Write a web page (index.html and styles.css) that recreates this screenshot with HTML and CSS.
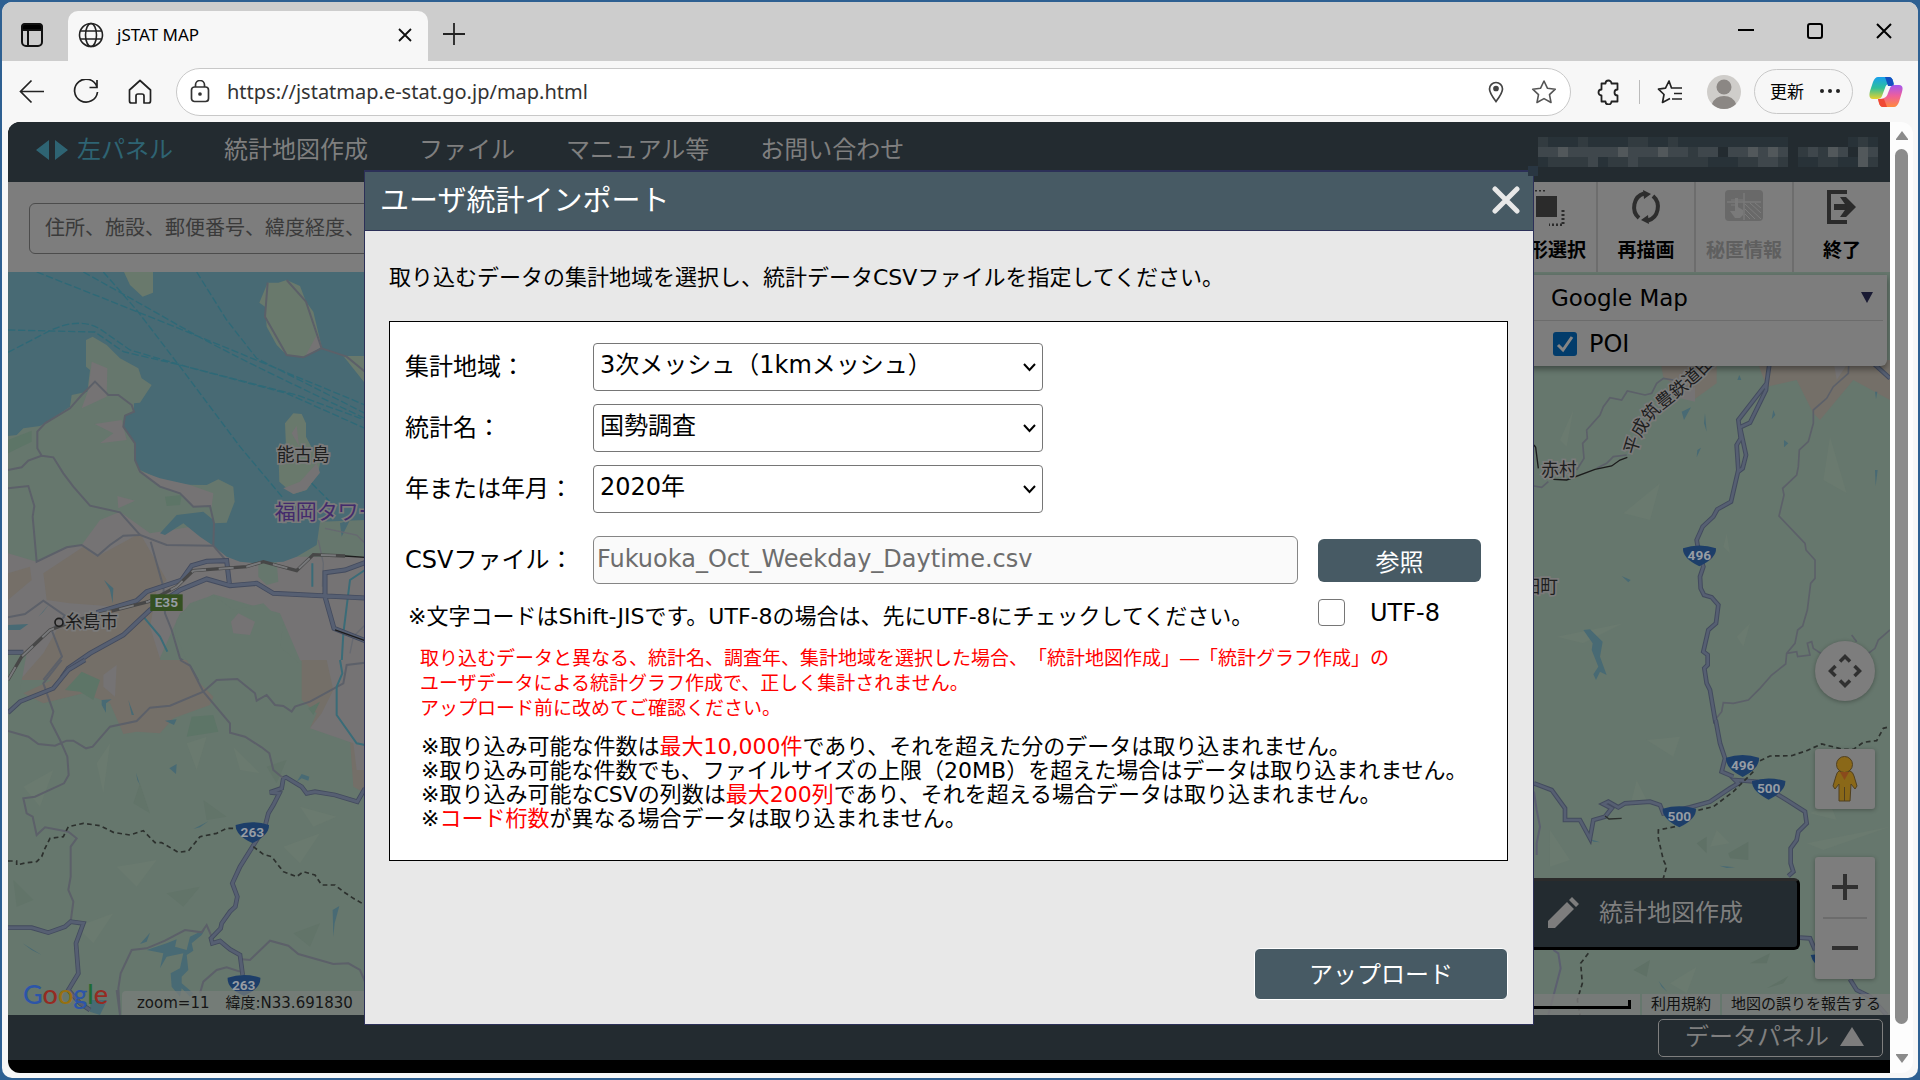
FILE: index.html
```html
<!DOCTYPE html>
<html lang="ja">
<head>
    <meta charset="UTF-8">
    <meta name="viewport" content="width=device-width, initial-scale=1.0">
    <title>jSTAT MAP</title>
    <link rel="stylesheet" href="styles.css">
</head>
<body>
<div class="window">
    <!-- title bar -->
    <div class="titlebar">
        <button class="icon-btn tab-actions" aria-label="タブ操作">
            <svg width="24" height="26" viewBox="0 0 24 26" fill="none" stroke="#111" stroke-width="2"><rect x="2" y="2" width="20" height="22" rx="4"/><path d="M2 8H22V5Q22 2 19 2H5Q2 2 2 5Z" fill="#000"/><path d="M8 8V24"/></svg>
        </button>
        <div class="tab">
            <svg width="26" height="26" viewBox="0 0 26 26" fill="none" stroke="#222" stroke-width="1.6"><circle cx="13" cy="13" r="11.5"/><ellipse cx="13" cy="13" rx="5.5" ry="11.5"/><path d="M2.5 9H23.500M2.500 17H23.500"/></svg>
            <span class="tab-title">jSTAT MAP</span>
            <button class="icon-btn" aria-label="タブを閉じる"><svg width="14" height="14" viewBox="0 0 14 14" stroke="#111" stroke-width="1.8"><path d="M1 1L13 13M13 1L1 13"/></svg></button>
        </div>
        <button class="icon-btn new-tab" aria-label="新しいタブ"><svg width="22" height="22" viewBox="0 0 22 22" stroke="#222" stroke-width="1.8"><path d="M11 0V22M0 11H22"/></svg></button>
        <div class="win-controls">
            <button class="icon-btn" aria-label="最小化"><svg width="16" height="16" viewBox="0 0 16 16" stroke="#000" stroke-width="2"><path d="M0 7H16"/></svg></button>
            <button class="icon-btn" aria-label="最大化"><svg width="16" height="16" viewBox="0 0 16 16" fill="none" stroke="#000" stroke-width="2"><rect x="1" y="1" width="14" height="14" rx="2"/></svg></button>
            <button class="icon-btn" aria-label="閉じる"><svg width="16" height="16" viewBox="0 0 16 16" stroke="#000" stroke-width="2"><path d="M1 1L15 15M15 1L1 15"/></svg></button>
        </div>
    </div>

    <!-- address bar -->
    <div class="toolbar">
        <div class="nav-buttons">
            <button class="icon-btn" aria-label="戻る"><svg width="26" height="26" viewBox="0 0 26 26" fill="none" stroke="#222" stroke-width="1.7"><path d="M25 12.500H2M12.500 1.500L1.500 12.500L12.500 23.500"/></svg></button>
            <button class="icon-btn" aria-label="更新"><svg width="26" height="26" viewBox="0 0 26 26" fill="none" stroke="#222" stroke-width="1.7"><path d="M24 8A11.500 11.500 0 1 0 24.500 13M24 1V8.500H16.500"/></svg></button>
            <button class="icon-btn" aria-label="ホーム"><svg width="26" height="26" viewBox="0 0 26 26" fill="none" stroke="#222" stroke-width="1.7" stroke-linejoin="round"><path d="M2.500 11L13 1.500L23.500 11V22Q23.500 24 21.500 24H17V17Q17 15 15 15H11Q9 15 9 17V24H4.500Q2.500 24 2.500 22Z"/></svg></button>
        </div>
        <div class="address">
            <svg width="20" height="24" viewBox="0 0 20 24" fill="none" stroke="#333" stroke-width="1.7"><rect x="1.500" y="7" width="17" height="14.500" rx="3"/><path d="M5.500 7V5A4.500 4.500 0 0 1 14.500 5V7"/><circle cx="10" cy="14" r="1" fill="#333"/></svg>
            <input type="text" class="url" aria-label="アドレス" value="https://jstatmap.e-stat.go.jp/map.html">
            <svg width="16" height="22" viewBox="0 0 16 22" fill="none" stroke="#444" stroke-width="1.7"><path d="M8 20.500Q1.500 12 1.500 8A6.500 6.500 0 0 1 14.500 8Q14.500 12 8 20.500Z"/><circle cx="8" cy="7.500" r="2" fill="#444"/></svg>
            <button class="icon-btn star" aria-label="お気に入りに追加"><svg width="26" height="26" viewBox="0 0 26 26" fill="none" stroke="#555" stroke-width="1.6" stroke-linejoin="round"><path d="M13 2L16.400 9.200L24.300 10.200L18.500 15.600L20 23.500L13 19.600L6 23.500L7.500 15.600L1.700 10.200L9.600 9.200Z"/></svg></button>
        </div>
        <div class="tools">
            <button class="icon-btn" aria-label="拡張機能"><svg width="26" height="26" viewBox="0 0 26 26" fill="none" stroke="#222" stroke-width="1.8" stroke-linejoin="round"><path d="M5.500 4.500H9.500A3 3 0 1 1 15.500 4.500H21.500V10.500A3 3 0 1 0 21.500 16.500V22.500H15.500A3 3 0 1 1 9.500 22.500H5.500V16.500A3 3 0 1 1 5.500 10.500Z"/></svg></button>
            <span class="divider"></span>
            <button class="icon-btn" aria-label="お気に入り"><svg width="26" height="26" viewBox="0 0 26 26" fill="none" stroke="#222" stroke-width="1.7" stroke-linejoin="round"><path d="M15.500 9H14.500L12 2L8.500 9.200L1.500 10.200L7 15.500L5.500 23.500L13 19.600M15.500 9H25M17 14.500H25M15 20H25"/></svg></button>
            <svg width="34" height="34" viewBox="0 0 34 34"><circle cx="17" cy="17" r="17" fill="#cfcdca"/><circle cx="17" cy="12" r="7.500" fill="#8b8784"/><path d="M5 29Q8 21 17 21T29 29Q24 34 17 34T5 29Z" fill="#8b8784"/></svg>
            <button class="update">更新<svg width="20" height="4" viewBox="0 0 20 4" fill="#222"><circle cx="2" cy="2" r="2"/><circle cx="10" cy="2" r="2"/><circle cx="18" cy="2" r="2"/></svg></button>
            <svg width="34" height="32" viewBox="0 0 34 32">
                <defs>
                    <linearGradient id="cpa" x1="0" y1="0" x2="0" y2="1"><stop offset="0" stop-color="#18a0ee"/><stop offset=".5" stop-color="#2fbf9a"/><stop offset="1" stop-color="#e8d22c"/></linearGradient>
                    <linearGradient id="cpb" x1="0" y1="0" x2="0" y2="1"><stop offset="0" stop-color="#a557f0"/><stop offset=".5" stop-color="#ef5f9a"/><stop offset="1" stop-color="#ff8a3c"/></linearGradient>
                </defs>
                <path d="M9 1H20Q23 1 24 5L25 8H20Q17 8 16 12L13 20Q12 23 8 23H4Q-1 23 1 15L4 6Q6 1 9 1Z" fill="url(#cpa)"/>
                <path d="M16 1H20Q23 1 24 5L25 10H19Z" fill="#1450c0"/>
                <path d="M26 9H30Q35 9 33 16L30 26Q28 31 25 31H14Q11 31 10 27L9 23Q13 23 15 22Q18 21 19 17L21 12Q22 9 26 9Z" fill="url(#cpb)"/>
                <path d="M9 23H15L18 31H14Q11 31 10 27Z" fill="#ef4a35"/>
            </svg>
        </div>
    </div>

    <div class="viewport">
        <div class="page">
            <header class="site-nav">
                <button class="panel-toggle"><svg width="32" height="20" viewBox="0 0 32 20" fill="#2e6473"><path d="M0 10L13 0V20ZM32 10L19 0V20Z"/></svg>左パネル</button>
                <a href="#">統計地図作成</a>
                <a href="#">ファイル</a>
                <a href="#">マニュアル等</a>
                <a href="#">お問い合わせ</a>
                <!-- masked account name -->
                <svg class="account" width="340" height="30" viewBox="0 0 34 3" shape-rendering="crispEdges">
                    <path fill="#283238" d="M0 0h34v3h-34z"/>
                    <path fill="#323b40" d="M0 0h1v1h-1zM4 0h1v1h-1zM9 0h2v1h-2zM13 0h1v1h-1zM32 0h1v1h-1zM1 2h4v1h-4zM7 2h2v1h-2zM10 2h5v1h-5zM15 2h2v1h-2zM20 2h2v1h-2zM24 2h1v1h-1zM28 2h2v1h-2zM33 2h1v1h-1zM26 1h3v1h-3zM15 1h1v1h-1z"/>
                    <path fill="#3f474c" d="M0 1h2v1h-2zM3 1h5v1h-5zM9 1h3v1h-3zM13 1h2v1h-2zM16 1h2v1h-2zM19 1h2v1h-2zM22 1h3v1h-3zM27 1h1v1h-1zM30 1h1v1h-1zM33 1h1v1h-1zM5 2h1v1h-1zM9 2h1v1h-1zM22 2h2v1h-2z"/>
                    <path fill="#52585b" d="M2 1h1v1h-1zM8 1h1v1h-1zM12 1h1v1h-1zM21 1h1v1h-1zM23 1h1v1h-1zM29 1h1v1h-1zM32 1h1v2h-1z"/>
                    <path fill="#232b30" d="M18 1h1v1h-1zM25 1h1v2h-1zM31 1h1v1h-1zM25 0h6v1h-6z"/>
                </svg>
            </header>

            <div class="map-tools">
                <input type="text" class="search" aria-label="検索" placeholder="住所、施設、郵便番号、緯度経度、メッシュコードを入力">
                <div class="tool-buttons">
                    <button><svg width="38" height="36" viewBox="0 0 38 36"><rect x="7" y="6" width="21" height="21" fill="#2b2b2b"/><path d="M2 0H16M34 20V35H20" fill="none" stroke="#2b2b2b" stroke-width="3" stroke-dasharray="2"/></svg>図形選択</button>
                    <button><svg width="32" height="34" viewBox="0 0 32 34" fill="none" stroke="#2d2d2d" stroke-width="4"><path d="M9 28A13 14 0 0 1 14 3.500M23 6A13 14 0 0 1 18 30.500"/><path d="M13 0L21 4L14 9ZM19 34L11 30L18 25Z" fill="#2d2d2d" stroke="none"/></svg>再描画</button>
                    <button disabled><svg width="38" height="32" viewBox="0 0 38 32"><rect width="38" height="31" rx="4" fill="#696969"/><path d="M19 3V30M2 12H36" stroke="#7a7a7a" stroke-width="1.500"/><path d="M20 14L36 29M20 19L30 29M20 24L25 29M25 13L36 23M30 13L36 18M6 15H13M6 10H18" stroke="#7d7d7d"/><path d="M10 8h3v9l5 3v5l-3 3h-5l-5-7h5z" fill="#7a7a7a"/></svg>秘匿情報</button>
                    <button><svg width="30" height="34" viewBox="0 0 30 34" fill="none" stroke="#2b2b2b" stroke-width="4"><path d="M20 2H2V32H20"/><path d="M7 17H20" stroke-width="6"/><path d="M13 7H19L29 17L19 27H13L20 17Z" fill="#2b2b2b" stroke="none"/></svg>終了</button>
                </div>
            </div>

            <div class="map">
                <svg class="map-canvas" viewBox="8 272 1882 743" preserveAspectRatio="xMinYMin slice">
                    <rect x="8" y="272" width="1882" height="743" fill="#66776d"/>
                    <!-- north west: bay, peninsula and town -->
                    <g transform="translate(0 260) scale(.33333)">
                        <path fill="#757374" d="M24 880L110 905L200 862L245 855L300 780L360 755L450 820L640 790L700 890H1095V1300H1060L900 1200L840 1060L640 1003L540 1060L450 1260H24Z"/>
                        <path fill="#756f68" d="M130 940L250 860L290 890L420 820L500 960L470 990L450 1100L500 1260H150L240 1160L180 1100L350 1040L210 1030L140 1020ZM24 940L90 920L95 960L24 1020ZM170 1110L260 1090L300 1160L180 1260H60L130 1180Z"/>
                        <path fill="#66776d" d="M530 1080L570 1030L640 1005L700 1050L790 1030L850 1090L840 1160L910 1220L915 1290H600L560 1200L525 1120ZM24 1170L80 1180L60 1290H24ZM775 900L830 905L835 965L800 975L775 950Z"/>
                        <path fill="#757374" d="M693 1085L715 1060L765 1085L750 1125L700 1120Z"/>
                        <path fill="#486a74" d="M24 30H1095V780L960 785L950 855L890 890L850 905L770 910L720 905L680 890L640 857L642 790L680 788L704 725L700 680L655 658L620 675L560 674L480 658L420 630L405 600L405 550L370 500L375 465L402 455L402 430L420 428L455 375L425 355L415 325L360 295L320 255L278 230L258 240L258 320L270 330L262 395L215 405L210 440L135 490L120 498L70 505L50 525L24 528Z"/>
                        <path fill="#69796c" d="M372 36H459V98L428 110L390 75ZM803 68H835L860 60L900 78L918 125L940 155L965 260L910 292L860 285L830 255L800 200L795 140L778 128ZM855 490L880 460L905 462L918 490V530L960 610L955 640L920 690L880 702L838 665L836 600L858 560ZM1030 288H1095V370Z"/>
                        <path fill="#757374" d="M275 305L322 325L320 410L245 445L265 390ZM284 492L365 480L380 540L300 550L340 520ZM352 708L405 722L355 745ZM410 630L480 655L570 675L640 700L635 740L580 740L540 700L480 680ZM875 520L890 497L897 558ZM950 610L960 638L918 690L880 702L850 685L900 665ZM950 225L965 260L915 290Z"/>
                        <path fill="#486a74" d="M480 820L530 765L610 755L640 780V857L600 830L550 790L495 825ZM24 1095L85 1092L60 1110H24ZM130 1055L115 1070L150 1030ZM312 960L340 985L338 1030L330 990ZM1020 790L1050 780L1025 830Z"/>
                        <path fill="#5d7567" d="M24 540L95 512V545L24 580ZM495 710L545 705L540 735L500 738Z"/>
                        <g fill="none" stroke="#2e6977" stroke-width="4" stroke-dasharray="22 8">
                            <path d="M110 36Q350 130 560 215T1095 435M250 36Q420 130 560 210T1095 475M24 210L285 216L370 275L540 315L860 400L1095 505M24 277L150 212Q240 170 300 207L390 270L560 320L890 405L1095 480M310 36L410 150L540 320L720 560L850 715M590 36L680 180L770 295L1095 460M935 670L1000 735"/>
                        </g>
                        <g fill="none" stroke="#5c6069" stroke-width="6">
                            <path d="M24 630L65 622L85 602L125 587L112 565V515L135 490L210 445L245 405L285 365L325 405H355L395 435L402 455L375 467L370 500L405 550V600L420 635L480 680L540 700L580 740L630 738L642 790L640 857L500 855L420 825L360 757L270 737L220 680L190 640L160 592L125 587M24 685L85 678L103 738L98 770L110 905L200 862L245 855L293 887L330 855L370 827L420 825M452 845L490 980L495 1060L515 1110L540 1195L570 1217L595 1262M640 857L685 910M24 1072L75 1062L130 1022L195 1067L155 1110L186 1190L130 1260M803 68L795 170L860 285L910 292L965 265L918 125L860 60M965 265L1040 290L1095 335"/>
                            <path stroke="#666970" stroke-width="4" d="M955 840L970 910L967 980M975 805L1070 825L1095 850M1095 1095L1060 1130L1050 1180M1035 1260V1212L1095 1205"/>
                        </g>
                        <path fill="none" stroke="#3a6c78" stroke-width="6" d="M1022 1260L1030 1120L1050 960L1095 930M430 1070L480 1130L502 1175M937 910V980"/>
                        <g fill="none">
                            <path stroke="#434b5e" stroke-width="15" d="M24 1177H70M160 1290L205 1225L270 1180L370 1125L450 1050L540 990L620 957L690 977L770 970L820 1000L980 1008L1095 1014M290 1058L410 1022L440 995L545 960L575 917L620 904L680 902L688 970M1095 908L1035 930L975 938V1010L1002 1105L1095 1142"/>
                            <path stroke="#565f72" stroke-width="10" d="M24 1177H70M160 1290L205 1225L270 1180L370 1125L450 1050L540 990L620 957L690 977L770 970L820 1000L980 1008L1095 1014M290 1058L410 1022L440 995L545 960L575 917L620 904L680 902L688 970M1095 908L1035 930L975 938V1010L1002 1105L1095 1142"/>
                            <path stroke="#474747" stroke-width="10" d="M24 1260L65 1190L150 1110L230 1080L445 1025L530 980L580 932L740 920L790 905L890 932L940 884L1035 888"/>
                            <path stroke="#77787a" stroke-width="6" stroke-dasharray="45 38" d="M24 1260L65 1190L150 1110L230 1080L445 1025L530 980L580 932L740 920L790 905L890 932L940 884L1035 888"/>
                            <path stroke="#1c1c1c" stroke-width="4" d="M1035 888L1095 892M1005 1110L1095 1142"/>
                        </g>
                        <rect x="451" y="1003" width="97" height="50" fill="#355022"/>
                        <text class="badge" x="499" y="1042">E35</text>
                        <circle cx="177" cy="1087" r="12" fill="#757374" stroke="#1e1e1e" stroke-width="5"/>
                        <g class="place">
                            <text x="830" y="604">能古島</text>
                            <text x="195" y="1104">糸島市</text>
                            <text class="poi" x="824" y="777">福岡タワー</text>
                        </g>
                    </g>
                    <!-- south west: mountains -->
                    <g transform="translate(0 660) scale(.33333)">
                        <path fill="#746f68" d="M220 30L270 0H560L600 70L640 110L630 135L520 175L480 220L410 215L370 222L330 130L250 100L130 130L70 100ZM905 0H1095V400L1060 380L1050 240L930 205L950 160L905 120Z"/>
                        <path fill="#757374" d="M980 0H1095V330L1070 330L1060 250L930 205L965 160L1000 90ZM310 45L350 15L345 110L310 80Z"/>
                        <path fill="#5d7567" d="M195 90L245 35L300 60L280 120L240 95ZM575 170L640 165L655 215L560 230ZM925 145L960 125L940 165Z"/>
                        <g fill="#6a7a6f"><path d="M290 310L330 250L310 400ZM560 250L620 230L590 330ZM70 380L160 330L120 440ZM350 620L470 600L410 680ZM850 560L960 520L900 610ZM230 800L340 760L280 850ZM900 440L1010 470L940 500ZM700 260L780 340L720 330Z"/></g>
                        <g fill="#627469"><path d="M420 370L450 460L400 430ZM800 320L860 300L830 370ZM40 660L100 720L50 740ZM500 700L600 680L550 740ZM880 820L960 790L930 860ZM610 420L680 470L620 480Z"/></g>
                        <path fill="#486a74" d="M305 120L335 118L318 130V158L305 135ZM508 325L530 312L528 342ZM890 365L905 342L928 350L925 362L905 355ZM385 120L402 165H395ZM408 338L420 375L412 360ZM495 182L530 178L522 195ZM440 870L500 850L530 838L525 860L560 870L570 830L615 808L605 825L575 850L580 872L560 885L565 930L545 950V970L580 1000L570 1010L545 985L540 1010L515 980L512 940L540 925L550 880L500 890L480 925L490 880ZM420 852L450 818L440 845ZM68 850L125 885L95 870ZM580 507L625 484L600 502ZM265 710L277 676ZM998 750L1018 738L1004 790L1000 830ZM932 785L950 762ZM272 1020H322L300 1065L270 1055Z"/>
                        <g fill="none" stroke="#5c6069" stroke-width="6">
                            <path d="M185 0L130 70L160 155L152 185L180 240L202 290L206 345L192 370L105 410L70 415L80 460L98 470L110 525L135 502L205 515L230 535L212 560V650L205 690L220 725L212 785M24 213L85 230L115 252L165 257L200 242H220L258 265L278 260L330 200L410 183L450 143L510 137L610 95L650 60L712 57L765 100L770 122L800 105L825 135L850 138L875 155L885 140L930 125L1030 70L1040 15L1095 8M540 0L570 17L610 95L690 190V218L735 230L785 262L808 280L820 330L850 355M360 1065L355 985L362 940L395 870L440 865L495 842L555 810L605 817L620 795L635 830M360 1065L350 990M600 1000L610 965L650 930L680 922L720 935M725 898L750 900L810 842L865 857L895 882L1000 912L1045 910L1080 930L1095 965"/>
                            <path stroke="#3a6c78" d="M1020 0L1027 40L1010 80V165L1070 250L1095 255"/>
                        </g>
                        <g fill="none">
                            <path stroke="#434b5e" stroke-width="14" d="M24 158L60 125L160 85L205 30L255 0M24 803H95L145 818L195 800L212 785L250 790L228 850L235 940L205 990L240 1030L270 1050M850 355L858 352L905 380L920 400L945 395L1005 405L1072 425L1095 385M850 355L845 385L810 397L838 400L820 435L805 460L795 500L720 620L697 670L712 710L706 740L690 755L665 790L662 805L633 835L637 850L660 843L690 868L720 885L728 945"/>
                            <path stroke="#565f72" stroke-width="9" d="M24 158L60 125L160 85L205 30L255 0M24 803H95L145 818L195 800L212 785L250 790L228 850L235 940L205 990L240 1030L270 1050M850 355L858 352L905 380L920 400L945 395L1005 405L1072 425L1095 385M850 355L845 385L810 397L838 400L820 435L805 460L795 500L720 620L697 670L712 710L706 740L690 755L665 790L662 805L633 835L637 850L660 843L690 868L720 885L728 945"/>
                            <path stroke="#2c302d" stroke-width="5" stroke-dasharray="14 10" d="M24 603H50V615L80 608L110 605L125 590L135 565L150 535L190 530L205 500L250 490L300 497L340 517L390 525L430 512L465 548H485L535 577L565 573L600 530L650 520L680 505H712M760 560L790 583L815 590L850 635L890 650L910 635L945 645L965 675L1005 675L1030 695L1060 715L1095 735"/>
                        </g>
                        <g class="shields">
                            <path d="M707 495Q757 478 807 495Q808 525 757 549Q706 525 707 495Z"/><text class="badge" x="757" y="530">263</text>
                            <path d="M683 953Q732 937 781 953Q784 985 732 1008Q680 985 683 953Z"/><text class="badge" x="731" y="989">263</text>
                        </g>
                    </g>
                    <!-- north east -->
                    <g transform="translate(1530 360) scale(.33333)">
                        <path fill="#746f68" d="M390 0H560V70L490 120L400 50ZM680 0H1080V120L970 60L870 180L850 160L800 60L710 80Z"/>
                        <path fill="#757374" d="M430 110L495 80V125ZM910 0H960L920 60Z"/>
                        <g fill="#6a7a6f"><path d="M90 240L130 150L110 260ZM280 460L390 370L360 480ZM590 520L600 580L580 560ZM880 360L900 230L950 400ZM80 830L280 790L160 850ZM620 830L660 790L640 860Z"/></g>
                        <path fill="#486a74" d="M160 810L180 808L218 845L210 890L230 945L210 935L198 960L190 943L205 920L185 870L188 850ZM455 155L483 142L462 180ZM525 160L530 215L522 190ZM762 240L775 250L762 262ZM66 455L92 480ZM275 648L302 660L295 667ZM154 535L170 570ZM730 150L736 165L725 178ZM1035 95H1042L1038 118ZM1035 330L1043 330L1037 378ZM965 445L955 480ZM628 45L634 60H622ZM502 270L513 263L500 292Z"/>
                        <g fill="none" stroke="#5c6069" stroke-width="5">
                            <path d="M12 378L35 382L55 365M140 330L162 295L158 250L172 235L170 210L210 165L220 140L240 113L275 120L292 93L345 105L365 100L380 70L400 55L430 60M200 325L230 310L250 290L290 285M957 0L955 40L910 80L890 115L850 150V190L835 245L808 270L805 320L800 345L758 385L762 405L747 468L825 550L828 570L855 600V655L842 670L832 750L818 798L803 810L795 850L770 880L767 912L725 945L690 985L655 1020L610 1030L580 1028L575 1055L555 1080M770 880L800 875L803 890L840 885L832 850L845 845L850 865L880 885M1080 810L1045 840L1035 865L1015 880M980 845L965 825"/>
                        </g>
                        <g fill="none">
                            <path stroke="#434b5e" stroke-width="14" d="M720 0L710 70L625 180L632 235L620 255L625 330L603 425L562 448L550 470L518 500L500 540L505 570L520 620L510 650L512 685L522 705L545 712L565 735L558 790L535 810L520 875L533 885V915L523 925L530 970L540 990L557 1090M710 70L708 90L660 188L630 202L648 285L638 325L625 335M1030 10L1080 55"/>
                            <path stroke="#565f72" stroke-width="8" d="M720 0L710 70L625 180L632 235L620 255L625 330L603 425L562 448L550 470L518 500L500 540L505 570L520 620L510 650L512 685L522 705L545 712L565 735L558 790L535 810L520 875L533 885V915L523 925L530 970L540 990L557 1090M710 70L708 90L660 188L630 202L648 285L638 325L625 335M1030 10L1080 55"/>
                            <path stroke="#1c1c1c" stroke-width="4" d="M12 255L17 262L25 325M70 358L110 360L195 328L245 318L270 300L292 292"/>
                        </g>
                        <path class="shield" d="M459 565Q508 548 558 565Q560 595 508 619Q457 595 459 565Z"/><text class="badge" x="508" y="600">496</text>
                        <g class="place">
                            <text x="34" y="348">赤村</text>
                            <text x="-22" y="700">田町</text>
                            <path id="rail" d="M318 286Q335 195 420 130T560 5" fill="none"/>
                            <text><textPath href="#rail">平成筑豊鉄道田</textPath></text>
                        </g>
                    </g>
                    <!-- south east -->
                    <g transform="translate(1530 720) scale(.33333)">
                        <g fill="#6a7a6f"><path d="M350 60L450 50L430 110ZM840 280L900 250L920 300ZM320 180L350 240L300 260ZM830 370L1080 320L880 390ZM60 330L120 420L60 440ZM540 380L560 330L600 370ZM420 790L500 740L470 820Z"/></g>
                        <g fill="#5f7166"><path d="M595 400L655 365V420L600 415ZM710 805L775 768L760 790ZM500 370L530 350L530 400ZM660 730L720 700L710 730ZM310 750L360 720L350 770Z"/></g>
                        <path fill="#486a74" d="M57 22L80 65ZM33 180L118 207ZM180 357L210 367L190 365ZM235 403L290 410ZM568 437L615 442L590 444ZM640 460L677 450ZM386 783L412 816L395 800Z"/>
                        <g fill="none">
                            <path stroke="#5c5f70" stroke-width="6" d="M12 215L20 270L30 320L20 370V405M70 690L85 700L92 745L75 810L55 885"/>
                            <path stroke="#434b5e" stroke-width="14" d="M557 0L570 70L585 115L575 155L610 170M12 190L65 210L105 265V300H150L180 355L190 300L225 290L245 265L220 252L235 245L265 262L285 250L360 245L390 255L400 280L480 262L540 245L600 205L625 190L615 180L680 185L770 240L825 275L830 310L805 335L800 360L782 385V430L790 455L775 468M810 653L840 655L855 690M960 778L980 810L1020 830L1070 885"/>
                            <path stroke="#565f72" stroke-width="8" d="M557 0L570 70L585 115L575 155L610 170M12 190L65 210L105 265V300H150L180 355L190 300L225 290L245 265L220 252L235 245L265 262L285 250L360 245L390 255L400 280L480 262L540 245L600 205L625 190L615 180L680 185L770 240L825 275L830 310L805 335L800 360L782 385V430L790 455L775 468M810 653L840 655L855 690M960 778L980 810L1020 830L1070 885"/>
                            <path stroke="#2c302d" stroke-width="5" stroke-dasharray="14 10" d="M690 122L720 108L785 107L830 92L875 72L940 88H970L1000 67L1040 62L1060 25L1080 20M670 155L610 215L550 260L500 272M435 320L385 330V355L400 420L410 440L400 475M175 700L152 730L157 790L142 840L150 885"/>
                            <path stroke="#2c302d" stroke-width="4" d="M225 288L237 297L275 295"/>
                        </g>
                        <g class="shields">
                            <path d="M588 113Q638 97 687 113Q690 145 638 171Q585 145 588 113Z"/><text class="badge" x="638" y="150">496</text>
                            <path d="M666 183Q716 168 766 183Q768 213 716 239Q664 213 666 183Z"/><text class="badge" x="716" y="219">500</text>
                            <path d="M398 266Q448 252 498 266Q500 296 448 322Q396 296 398 266Z"/><text class="badge" x="448" y="303">500</text>
                            <path d="M842 705L890 700V750Q850 740 842 705Z"/>
                        </g>
                    </g>
                </svg>

                <section class="layers">
                    <button class="layer-head">Google Map<svg width="12" height="11" viewBox="0 0 12 11" fill="#191a33"><path d="M0 0H12L6 11Z"/></svg></button>
                    <label class="layer-item"><input type="checkbox" checked>POI</label>
                </section>

                <div class="map-side">
                    <button class="round" aria-label="移動"><svg width="34" height="34" viewBox="0 0 34 34" fill="none" stroke="#303030" stroke-width="3.500"><path d="M12 7.500L17 2.500L22 7.500M12 26.500L17 31.500L22 26.500M7.500 12L2.500 17L7.500 22M26.500 12L31.500 17L26.500 22"/></svg></button>
                    <button class="square" aria-label="ストリートビュー"><svg width="26" height="46" viewBox="0 0 26 46" fill="#8a6818" stroke="#504020"><path d="M7 15H18Q21 16 22 20L25 30L23 33L19 28L18 45H7V28L3 33L1 30L4 20Q5 16 7 15Z"/><circle cx="12.500" cy="8.500" r="8"/><path d="M8 16H17L12.500 24Z" fill="#8a4a1c" stroke="none"/><path d="M12.500 31V45"/></svg></button>
                    <div class="zoom">
                        <button aria-label="拡大"><svg width="26" height="26" viewBox="0 0 26 26" stroke="#303030" stroke-width="4"><path d="M13 0V26M0 13H26"/></svg></button>
                        <button aria-label="縮小"><svg width="26" height="26" viewBox="0 0 26 26" stroke="#303030" stroke-width="4"><path d="M0 13H26"/></svg></button>
                    </div>
                </div>

                <button class="make-map"><svg width="32" height="32" viewBox="0 0 32 32" fill="#7d7d7d"><path d="M1 24L20 5L27 12L8 31H1ZM22 3L25 0L32 7L29 10Z"/></svg>統計地図作成</button>

                <div class="logo" aria-label="Google"><span class="b">G</span><span class="r">o</span><span class="y">o</span><span class="b">g</span><span class="g">l</span><span class="r">e</span></div>
                <div class="coords"><span>zoom=11</span><span>緯度:N33.691830</span></div>
                <div class="attribution"><span class="scale"><i></i></span><a href="#">利用規約</a><a href="#">地図の誤りを報告する</a></div>
            </div>

            <footer class="data-bar">
                <button>データパネル<svg width="24" height="20" viewBox="0 0 24 20" fill="#7d7d7d"><path d="M12 0L24 19H0Z"/></svg></button>
            </footer>

            <!-- import dialog -->
            <div class="overlay">
                <form class="modal" role="dialog" aria-labelledby="modalTitle">
                    <span class="corner"></span>
                    <div class="modal-head">
                        <h1 id="modalTitle">ユーザ統計インポート</h1>
                        <button type="button" class="icon-btn" aria-label="閉じる"><svg width="28" height="28" viewBox="0 0 28 28" stroke="#e8e8e8" stroke-width="5" stroke-linecap="round"><path d="M3 3L25 25M25 3L3 25"/></svg></button>
                    </div>
                    <div class="modal-body">
                        <p class="lead">取り込むデータの集計地域を選択し、統計データCSVファイルを指定してください。</p>
                        <div class="panel">
                            <div class="row">
                                <label for="area">集計地域：</label>
                                <select id="area"><option>3次メッシュ（1kmメッシュ）</option></select>
                            </div>
                            <div class="row">
                                <label for="stat">統計名：</label>
                                <select id="stat"><option>国勢調査</option></select>
                            </div>
                            <div class="row">
                                <label for="year">年または年月：</label>
                                <select id="year"><option>2020年</option></select>
                            </div>
                            <div class="row file-row">
                                <label for="csv">CSVファイル：</label>
                                <input type="text" id="csv" value="Fukuoka_Oct_Weekday_Daytime.csv" disabled>
                                <button type="button" class="btn browse">参照</button>
                            </div>
                            <div class="encoding">
                                <p>※文字コードはShift-JISです。UTF-8の場合は、先にUTF-8にチェックしてください。</p>
                                <label><input type="checkbox">UTF-8</label>
                            </div>
                            <p class="warning">取り込むデータと異なる、統計名、調査年、集計地域を選択した場合、「統計地図作成」―「統計グラフ作成」の<br>ユーザデータによる統計グラフ作成で、正しく集計されません。<br>アップロード前に改めてご確認ください。</p>
                            <p class="notes">※取り込み可能な件数は<em>最大10,000件</em>であり、それを超えた分のデータは取り込まれません。<br>※取り込み可能な件数でも、ファイルサイズの上限（20MB）を超えた場合はデータは取り込まれません。<br>※取り込み可能なCSVの列数は<em>最大200列</em>であり、それを超える場合データは取り込まれません。<br>※<em>コード桁数</em>が異なる場合データは取り込まれません。</p>
                        </div>
                        <div class="actions"><button type="submit" class="btn upload">アップロード</button></div>
                    </div>
                </form>
            </div>
        </div>

        <div class="scrollbar">
            <svg width="12" height="10" viewBox="0 0 12 10" fill="#8b8b8b"><path d="M6 0L12 8V9H0V8Z"/></svg>
            <span class="thumb"></span>
            <svg width="12" height="10" viewBox="0 0 12 10" fill="#8b8b8b"><path d="M6 9L12 1V0H0V1Z"/></svg>
        </div>
    </div>
</div>
</body>
</html>
```

FILE: styles.css
```css
* {
    box-sizing: border-box;
}
body {
    margin: 0;
    height: 100vh;
    padding: 2px;
    overflow: hidden;
    background: #2e6092;
    font-family: "DejaVu Sans", "Noto Sans CJK JP", sans-serif;
    font-size: 24px;
    text-spacing-trim: space-all;
}
button, input, select {
    font: inherit;
    color: inherit;
    margin: 0;
}
button {
    border: none;
    background: none;
    padding: 0;
    cursor: pointer;
}
p, h1 {
    margin: 0;
}
svg {
    display: block;
    flex: none;
}
a {
    color: inherit;
    text-decoration: none;
}
.icon-btn {
    display: flex;
    align-items: center;
    justify-content: center;
}

/* browser window */
.window {
    height: 100%;
    display: flex;
    flex-direction: column;
    background: #f7f7f7;
    border-radius: 10px;
    overflow: hidden;
}
.titlebar {
    display: flex;
    height: 59px;
    background: #cdcdcd;
}
.tab-actions {
    width: 66px;
    padding: 6px 18px 0 12px;
}
.tab {
    display: flex;
    align-items: center;
    width: 360px;
    margin-top: 9px;
    padding: 0 16px 2px 10px;
    background: #f7f7f7;
    border-radius: 10px 10px 0 0;
}
.tab-title {
    flex: 1;
    padding: 0 0 2px 13px;
    font-family: "Noto Sans", sans-serif;
    font-size: 17px;
}
.new-tab {
    margin: 5px 0 0 15px;
}
.win-controls {
    display: flex;
    gap: 53px;
    margin-left: auto;
    padding: 0 26px 1px 0;
}
.toolbar {
    display: flex;
    align-items: center;
    height: 61px;
    padding: 0 15px 0 17px;
}
.nav-buttons {
    display: flex;
    gap: 28px;
    width: 157px;
}
.address {
    flex: 1;
    display: flex;
    align-items: center;
    height: 48px;
    padding: 0 13px 0 13px;
    border: 1px solid #c8c8c8;
    border-radius: 24px;
    background: #fff;
}
.url {
    flex: 1;
    border: none;
    outline: none;
    padding: 0 0 0 17px;
    background: none;
    color: #333;
    font-family: "Noto Sans", sans-serif;
    font-size: 20px;
}
.star {
    margin-left: 27px;
}
.tools {
    display: flex;
    align-items: center;
    padding-left: 25px;
}
.divider {
    width: 1px;
    height: 24px;
    margin: 0 17px;
    background: #bbb;
}
.tools > svg {
    margin-left: 24px;
}
.update {
    display: flex;
    align-items: center;
    gap: 16px;
    height: 45px;
    margin-left: 13px;
    padding: 0 12px 2px 15px;
    border: 1px solid #c8c8c8;
    border-radius: 23px;
    font-size: 17px;
}
.tools > svg:last-child {
    margin-left: 16px;
}
.viewport {
    flex: 1;
    min-height: 0;
    display: flex;
    padding: 0 5px 5px 6px;
}
.scrollbar {
    width: 23px;
    display: flex;
    flex-direction: column;
    align-items: center;
    gap: 8px;
    padding: 9px 0;
    background: #fdfdfd;
    border-radius: 0 12px 12px 0;
}
.thumb {
    flex: 1;
    width: 13px;
    margin-bottom: 22px;
    border-radius: 7px;
    background: #8b8b8b;
}

/* page */
.page {
    position: relative;
    flex: 1;
    min-width: 0;
    display: flex;
    flex-direction: column;
    padding-bottom: 13px;
    background: #000;
    border-radius: 12px 0 0 12px;
    overflow: hidden;
}
.site-nav {
    display: flex;
    align-items: center;
    gap: 51px;
    height: 60px;
    padding: 0 12px 0 28px;
    background: #232b30;
    color: #7f7f7f;
    white-space: nowrap;
}
.site-nav > a, .panel-toggle {
    padding-bottom: 10px;
}
.panel-toggle {
    display: flex;
    align-items: center;
    gap: 9px;
    color: #2e6473;
}
.panel-toggle svg {
    margin-top: 6px;
}
.account {
    margin-left: auto;
}
.map-tools {
    display: flex;
    align-items: center;
    justify-content: space-between;
    height: 90px;
    padding-left: 21px;
    background: #7d7d7d;
}
.search {
    width: 560px;
    height: 51px;
    margin-top: 2px;
    padding: 0 15px;
    border: 1px solid #4c4c4c;
    border-radius: 6px;
    background: none;
    font-size: 20px;
}
.search::placeholder {
    color: #3a3a3a;
    opacity: 1;
}
.tool-buttons {
    display: flex;
    align-self: stretch;
}
.tool-buttons button {
    width: 98px;
    display: flex;
    flex-direction: column;
    align-items: center;
    justify-content: space-between;
    padding: 8px 0 7px;
    border-left: 2px solid #6d6d6d;
    color: #000;
    font-size: 19px;
    font-weight: bold;
    line-height: 30px;
}
.tool-buttons button:disabled {
    color: #5f5f5f;
}

/* map */
.map {
    position: relative;
    flex: 1;
    min-height: 0;
    overflow: hidden;
}
.map-canvas {
    position: absolute;
    width: 100%;
    height: 100%;
}
.place {
    fill: #1e1e1e;
    stroke: #7b7b7b;
    stroke-width: 10px;
    paint-order: stroke;
    font-family: "Noto Sans CJK JP", sans-serif;
    font-size: 53px;
}
.place path {
    stroke: none;
}
.poi {
    fill: #432a6c;
    font-size: 63px;
}
.shield, .shields path {
    fill: #1d3e69;
}
.badge {
    fill: #969ca3;
    font-family: Roboto, sans-serif;
    font-size: 41px;
    font-weight: bold;
    text-anchor: middle;
}
.layers {
    position: absolute;
    top: 3px;
    right: 3px;
    width: 360px;
    background: #7d7d7d;
    border-radius: 0 0 6px 6px;
    box-shadow: 0 3px 6px rgba(0, 0, 0, .4);
}
.layer-head {
    display: flex;
    align-items: center;
    justify-content: space-between;
    width: 356px;
    height: 46px;
    padding: 0 10px 0 24px;
    border-bottom: 1px solid #6c6c6c;
    font-size: 23px;
}
.layer-item {
    display: flex;
    align-items: center;
    gap: 12px;
    height: 45px;
    padding-left: 26px;
}
.layer-item input {
    width: 24px;
    height: 24px;
    appearance: none;
    border-radius: 3px;
    background: #023c6b url("data:image/svg+xml,%3Csvg xmlns='http://www.w3.org/2000/svg' viewBox='0 0 24 24'%3E%3Cpath d='M5 13l5 5L19 5' fill='none' stroke='%23858585' stroke-width='3'/%3E%3C/svg%3E");
}
.map-side {
    position: absolute;
    right: 15px;
    bottom: 36px;
    display: flex;
    flex-direction: column;
    gap: 48px;
}
.map-side button {
    display: flex;
    align-items: center;
    justify-content: center;
    width: 60px;
    height: 60px;
}
.round, .square, .zoom {
    background: #7d7d7d;
    border-radius: 3px;
    box-shadow: 0 1px 4px rgba(0, 0, 0, .3);
}
.map-side .round {
    border-radius: 50%;
}
.zoom button + button {
    height: 62px;
    background: linear-gradient(#6c6c6c, #6c6c6c) no-repeat center top / 44px 2px;
}
.make-map {
    position: absolute;
    right: 90px;
    bottom: 65px;
    display: flex;
    align-items: center;
    gap: 20px;
    width: 300px;
    height: 72px;
    padding: 0 0 8px 44px;
    border: 3px solid #000;
    border-top-color: #2b2b2b;
    border-radius: 6px;
    background: #232b30;
    color: #7f7f7f;
}
.make-map svg {
    margin-top: 6px;
}
.logo {
    position: absolute;
    left: 15px;
    bottom: -1px;
    font-family: Lato, sans-serif;
    font-size: 27px;
    font-weight: 500;
    line-height: 44px;
}
.logo .b {
    color: #2c55a8;
}
.logo .r {
    color: #952b22;
}
.logo .y {
    color: #967010;
}
.logo .g {
    color: #1f6b33;
}
.coords {
    position: absolute;
    left: 114px;
    bottom: 0;
    display: flex;
    gap: 16px;
    width: 280px;
    height: 24px;
    padding-left: 15px;
    background: rgba(123, 127, 124, .7);
    border-radius: 4px 0 0 0;
    color: #161616;
    font-size: 15px;
    line-height: 24px;
}
.attribution {
    position: absolute;
    right: 0;
    bottom: 0;
    display: flex;
    gap: 2px;
    height: 21px;
    font-size: 15px;
    line-height: 20px;
    color: #111;
}
.attribution > * {
    padding: 0 9px;
    background: rgba(122, 122, 122, .8);
}
.attribution i {
    display: block;
    width: 150px;
    height: 9px;
    margin-top: 6px;
    border: solid #000;
    border-width: 0 3px 3px;
}
.data-bar {
    display: flex;
    justify-content: flex-end;
    align-items: center;
    height: 45px;
    padding: 0 7px 0;
    background: #232b30;
}
.data-bar button {
    display: flex;
    align-items: center;
    justify-content: center;
    gap: 11px;
    width: 225px;
    height: 38px;
    padding: 0 0 2px 8px;
    border: 1px solid #7f7f7f;
    border-radius: 5px;
    color: #7f7f7f;
    line-height: 34px;
}

/* import dialog */
.overlay {
    position: absolute;
    inset: 0;
    display: flex;
    justify-content: center;
    align-items: flex-start;
    padding-top: 48px;
}
.modal {
    position: relative;
    width: 1170px;
    max-width: 100%;
    border: 1px solid #2c3058;
    border-top-width: 2px;
    background: #e8e8e8;
    color: #000;
}
.corner {
    position: absolute;
    top: -6px;
    right: -5px;
    width: 10px;
    height: 10px;
    background: #293642;
}
.modal-head {
    display: flex;
    align-items: center;
    justify-content: space-between;
    height: 59px;
    padding: 0 13px 0 15px;
    border-bottom: 1px solid #2c3058;
    background: #475a64;
}
.modal-head h1 {
    color: #fff;
    font-size: 29px;
    font-weight: normal;
    line-height: 44px;
}
.modal-head button {
    padding-bottom: 2px;
}
.modal-body {
    padding: 31px 25px 24px 24px;
}
.lead {
    font-size: 22px;
    line-height: 32px;
}
.panel {
    height: 540px;
    margin-top: 27px;
    padding: 21px 15px 0;
    border: 1px solid #000;
    background: #fff;
}
.row {
    display: flex;
    align-items: center;
    margin-bottom: 13px;
}
.row label {
    width: 188px;
    padding-bottom: 6px;
}
select {
    width: 450px;
    height: 48px;
    padding: 0 6px 4px;
    appearance: none;
    border: 1px solid #767676;
    border-radius: 4px;
    background: #fff url("data:image/svg+xml,%3Csvg xmlns='http://www.w3.org/2000/svg' width='13' height='9' viewBox='0 0 13 9'%3E%3Cpath d='M1 1l5.500 6L12 1' fill='none' stroke='%23000' stroke-width='2'/%3E%3C/svg%3E") no-repeat right 6px center;
}
.file-row {
    margin: 23px 0 10px;
}
#csv {
    width: 705px;
    height: 48px;
    padding: 0 3px 2px;
    border: 1px solid #858585;
    border-radius: 6px;
    background: #fafafa;
    color: #6d6d6d;
}
.btn {
    border-radius: 6px;
    background: #475a64;
    color: #fff;
}
.browse {
    width: 163px;
    height: 43px;
    margin-left: 20px;
}
.encoding {
    display: flex;
    align-items: center;
    height: 46px;
    padding-left: 3px;
}
.encoding p {
    flex: none;
    width: 910px;
    font-size: 22px;
    line-height: 32px;
    white-space: nowrap;
}
.encoding label {
    display: flex;
    align-items: center;
    gap: 25px;
    padding-bottom: 9px;
}
.encoding input {
    width: 27px;
    height: 27px;
    appearance: none;
    border: 1px solid #767676;
    border-radius: 4px;
    background: #fff;
}
.warning {
    margin-top: 6px;
    padding-left: 15px;
    color: #f00;
    font-size: 19px;
    line-height: 25px;
}
.notes {
    margin-top: 14px;
    padding-left: 16px;
    font-size: 22px;
    line-height: 24px;
    white-space: nowrap;
}
.notes em {
    color: #f00;
    font-style: normal;
}
.actions {
    display: flex;
    justify-content: flex-end;
    margin-top: 87px;
}
.upload {
    width: 254px;
    height: 52px;
    padding-bottom: 3px;
    border: 1px solid #fff;
}
```
